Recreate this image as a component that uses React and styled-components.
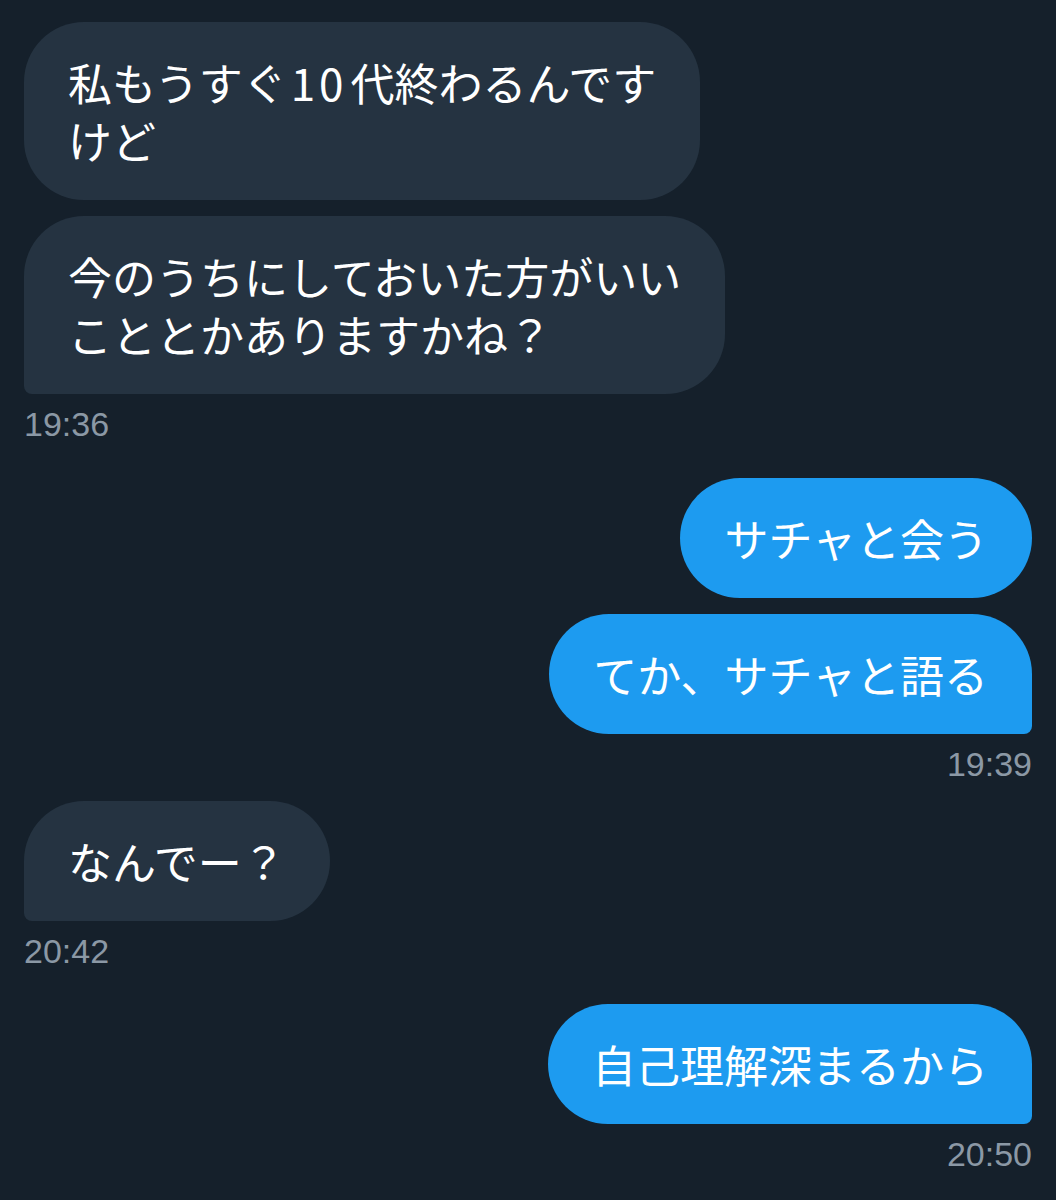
import React from "react";
import styled, { createGlobalStyle, css } from "styled-components";

const GlobalStyle = createGlobalStyle`
  html, body {
    margin: 0;
    padding: 0;
    background: #15202b;
  }
  body {
    font-family: "Noto Sans CJK JP", "Noto Sans", sans-serif;
    -webkit-font-smoothing: antialiased;
  }
`;

const Thread = styled.div`
  display: flex;
  flex-direction: column;
  padding: 22px 24px 0;
  min-height: 1200px;
  box-sizing: border-box;
  background: #15202b;
`;

const Group = styled.div`
  display: flex;
  flex-direction: column;
  align-items: ${(p) => (p.$mine ? "flex-end" : "flex-start")};
  gap: 16px;
  margin-top: ${(p) => p.$gap || 0}px;
`;

const Bubble = styled.div`
  box-sizing: border-box;
  padding: 31px 44px;
  font-size: 44px;
  line-height: 58px;
  color: #ffffff;
  white-space: pre-line;
  border-radius: 60px;
  background: ${(p) => (p.$mine ? "#1d9bf0" : "#253341")};
  ${(p) =>
    p.$tail &&
    (p.$mine
      ? css`
          border-bottom-right-radius: 8px;
        `
      : css`
          border-bottom-left-radius: 8px;
        `)}
`;

const Line = styled.span`
  display: block;
`;

const Num = styled.span`
  letter-spacing: 4px;
  padding: 0 3px 0 4px;
`;

const Time = styled.div`
  margin-top: -6px;
  font-family: "Liberation Sans", Arial, sans-serif;
  font-size: 34px;
  line-height: 40px;
  color: #8b98a5;
  align-self: ${(p) => (p.$mine ? "flex-end" : "flex-start")};
`;

const groups = [
  {
    mine: false,
    gap: 0,
    time: "19:36",
    messages: [
      [
        <>
          私もうすぐ<Num>10</Num>代終わるんです
        </>,
        "けど",
      ],
      ["今のうちにしておいた方がいい", "こととかありますかね？"],
    ],
  },
  {
    mine: true,
    gap: 34,
    time: "19:39",
    messages: [["サチャと会う"], ["てか、サチャと語る"]],
  },
  {
    mine: false,
    gap: 17,
    time: "20:42",
    messages: [["なんでー？"]],
  },
  {
    mine: true,
    gap: 33,
    time: "20:50",
    messages: [["自己理解深まるから"]],
  },
];

export default function App() {
  return (
    <>
      <GlobalStyle />
      <Thread>
        {groups.map((g, gi) => (
          <Group key={gi} $mine={g.mine} $gap={g.gap}>
            {g.messages.map((lines, mi) => (
              <Bubble
                key={mi}
                $mine={g.mine}
                $tail={mi === g.messages.length - 1}
              >
                {lines.map((l, li) => (
                  <Line key={li}>{l}</Line>
                ))}
              </Bubble>
            ))}
            <Time $mine={g.mine}>{g.time}</Time>
          </Group>
        ))}
      </Thread>
    </>
  );
}
